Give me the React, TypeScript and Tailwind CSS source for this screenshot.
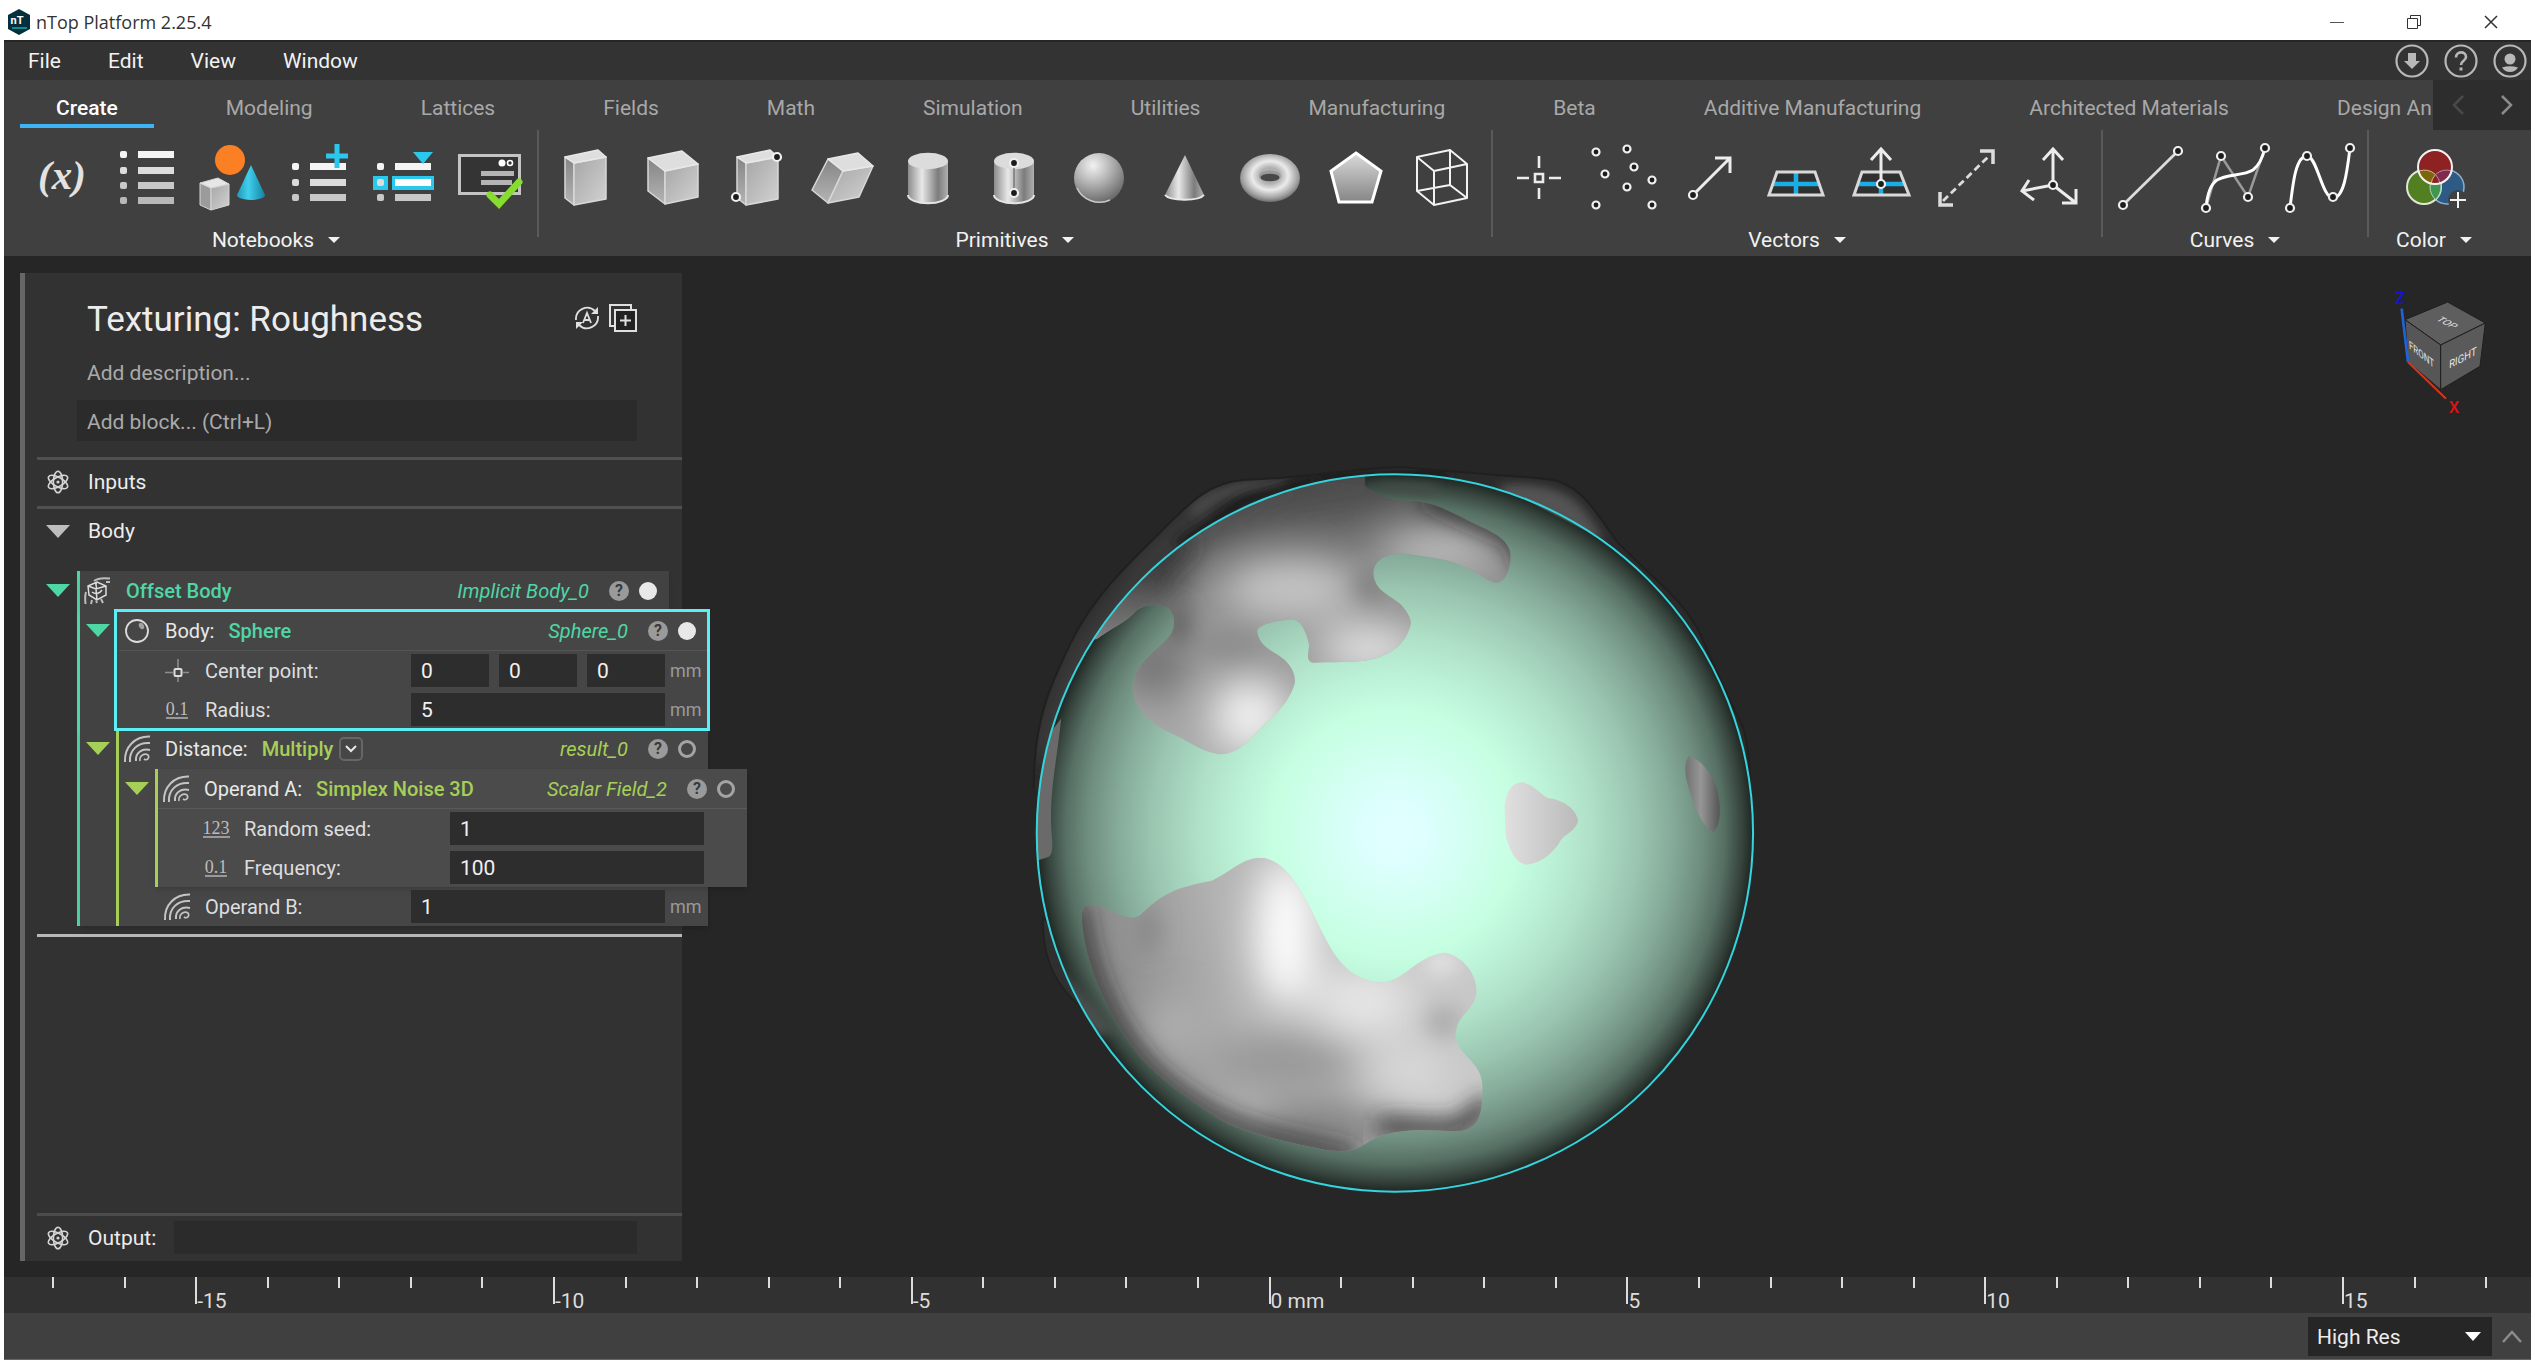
import type { ReactNode } from 'react';

/* ---------- small shared pieces ---------- */

function Caret({ className = '' }: { className?: string }) {
  return (
    <svg viewBox="0 0 12 6" className={`h-[6px] w-[12px] ${className}`} aria-hidden="true">
      <path d="M0 0H12L6 6Z" fill="currentColor" />
    </svg>
  );
}

function Toggle({ label, className = '' }: { label: string; className?: string }) {
  return (
    <button type="button" aria-label={`Collapse ${label}`} className={`flex shrink-0 justify-center ${className}`}>
      <svg viewBox="0 0 24 13" className="h-[13px] w-6" aria-hidden="true">
        <path d="M0 0H24L12 13Z" fill="currentColor" />
      </svg>
    </button>
  );
}

function Knob({ x, y, r = 4 }: { x: number; y: number; r?: number }) {
  return <circle cx={x} cy={y} r={r} fill="#1c1c1c" stroke="#f0f0f0" strokeWidth="2.2" />;
}

/* ---------- ribbon icons, all on an 86 x 80 field ---------- */

function BoxFaces({ top, left, front }: { top: string; left: string; front: string }) {
  return (
    <g strokeLinejoin="round" strokeWidth="1.5">
      <path d={left} fill="url(#faceSide)" stroke="#d8d8d8" />
      <path d={front} fill="url(#faceFront)" stroke="#d8d8d8" />
      <path d={top} fill="#dedede" stroke="#e8e8e8" />
    </g>
  );
}

const tallBox = (
  <BoxFaces
    top="M23 19L56 12L64 19L32 25Z"
    left="M23 19L32 25V67L23 60Z"
    front="M32 25L64 19V61L32 67Z"
  />
);

const cylinder = (
  <>
    <path d="M22 23V57A20 8.3 0 0 0 62 57V23Z" fill="url(#cyl)" />
    <path d="M22 57A20 8.3 0 0 0 62 57" fill="none" stroke="#e4e4e4" strokeWidth="2" />
    <ellipse cx="42" cy="23" rx="20" ry="8.3" fill="#dcdcdc" />
  </>
);

function ListRows({ ys, h, x = 16 }: { ys: number[]; h: number; x?: number }) {
  const tones = ['#f4f4f4', '#dcdcdc', '#c8c8c8', '#b8b8b8'];
  return (
    <>
      {ys.map((y, i) => (
        <g key={y} fill={tones[i]}>
          <rect x={x} y={y} width="7" height={h} rx="2" />
          <rect x={x + 18} y={y} width="36" height={h} />
        </g>
      ))}
    </>
  );
}

type Tool = { name: string; art: ReactNode };
type ToolGroup = { name: string; tools: Tool[] };

const groups: ToolGroup[] = [
  {
    name: 'Notebooks',
    tools: [
      {
        name: 'Variable',
        art: (
          <text x="44" y="51" textAnchor="middle" fontFamily="Liberation Serif, serif" fontStyle="italic" fontWeight="700" fontSize="41" fill="#e2e2e2">
            (x)
          </text>
        ),
      },
      { name: 'List', art: <ListRows ys={[13, 29, 44, 59]} h={7} /> },
      {
        name: 'Block',
        art: (
          <>
            <circle cx="40" cy="22" r="15" fill="#fb7f23" />
            <path d="M61 27L47 57A14 5 0 0 0 75 57Z" fill="url(#blueCone)" />
            <g stroke="#d5d5d5" strokeWidth="1">
              <path d="M10 45L21 50V72L10 67Z" fill="#9b9b9b" />
              <path d="M21 50L39 46V67L21 72Z" fill="url(#faceFront)" />
              <path d="M10 45L28 40L39 46L21 50Z" fill="#e6e6e6" />
            </g>
          </>
        ),
      },
      {
        name: 'Append to list',
        art: (
          <>
            <ListRows ys={[25, 41, 56]} h={7} />
            <path d="M61 6V30M50 18H72" stroke="#2bc8ee" strokeWidth="5" />
          </>
        ),
      },
      {
        name: 'Select list item',
        art: (
          <>
            <rect x="11" y="38" width="15" height="14" fill="#2bc8ee" />
            <rect x="30" y="38" width="42" height="14" fill="#2bc8ee" />
            <ListRows ys={[25, 41, 56]} h={7} x={15} />
            <rect x="33" y="41" width="36" height="7" fill="#fff" />
            <path d="M51 14H71L61 26Z" fill="#2bc8ee" />
          </>
        ),
      },
      {
        name: 'Validate',
        art: (
          <>
            <rect x="11.5" y="17.5" width="60" height="38" fill="#343434" stroke="#c4c4c4" strokeWidth="3" />
            <path d="M33 35.5H66M33 44.5H64" stroke="#b4b4b4" strokeWidth="5" />
            <circle cx="54" cy="25" r="3.5" fill="#fff" />
            <circle cx="62" cy="25" r="2.5" fill="none" stroke="#fff" strokeWidth="1.6" />
            <path d="M42 57L51 66L71 44" fill="none" stroke="#86dd2e" strokeWidth="7" strokeLinecap="round" />
          </>
        ),
      },
    ],
  },
  {
    name: 'Primitives',
    tools: [
      { name: 'Box', art: tallBox },
      {
        name: 'Cube',
        art: (
          <BoxFaces top="M20 20L54 13L70 26L37 33Z" left="M20 20L37 33V66L20 53Z" front="M37 33L70 26V59L37 66Z" />
        ),
      },
      {
        name: 'Box from corners',
        art: (
          <>
            {tallBox}
            <Knob x={63} y={19} />
            <Knob x={22} y={59} />
          </>
        ),
      },
      {
        name: 'Parallelepiped',
        art: (
          <BoxFaces top="M28 21L58 15L73 28L43 33Z" left="M28 21L43 33L28 65L12 52Z" front="M43 33L73 28L59 59L28 65Z" />
        ),
      },
      { name: 'Cylinder', art: cylinder },
      {
        name: 'Cylinder from points',
        art: (
          <>
            {cylinder}
            <path d="M42 25V55" stroke="#777" strokeWidth="1.5" />
            <Knob x={42} y={25} />
            <Knob x={42} y={55} />
          </>
        ),
      },
      {
        name: 'Sphere',
        art: (
          <>
            <circle cx="41" cy="40" r="25" fill="url(#ball)" />
            <path d="M19 50A25 25 0 0 0 52 62" fill="none" stroke="#c8c8c8" strokeWidth="1.5" />
          </>
        ),
      },
      {
        name: 'Cone',
        art: (
          <>
            <path d="M41 17L21 57A20 6 0 0 0 60 57Z" fill="url(#cyl)" />
            <path d="M21 57A20 6 0 0 0 60 57" fill="none" stroke="#e8e8e8" strokeWidth="2" />
          </>
        ),
      },
      {
        name: 'Torus',
        art: (
          <>
            <ellipse cx="40" cy="40" rx="30" ry="24" fill="url(#torus)" />
            <ellipse cx="40" cy="38" rx="11" ry="5.5" fill="#9a9a9a" />
            <ellipse cx="40" cy="39.5" rx="9.5" ry="3.8" fill="#484848" />
          </>
        ),
      },
      {
        name: 'Polygon',
        art: <path d="M40 15L65 33L56 64H23L15 33Z" fill="url(#faceDown)" stroke="#fff" strokeWidth="3" />,
      },
      {
        name: 'Bounding box',
        art: (
          <path
            d="M15 19L48 12L65 26L32 33ZM15 19V53L32 67L65 60V26M32 33V67M48 12V47L65 60M48 47L15 53"
            fill="none"
            stroke="#f2f2f2"
            strokeWidth="2"
            strokeLinejoin="round"
          />
        ),
      },
    ],
  },
  {
    name: 'Vectors',
    tools: [
      {
        name: 'Point',
        art: (
          <path d="M43 18V30M43 50V61M21 40H33M53 40H65M39 36H47V44H39Z" fill="none" stroke="#ececec" strokeWidth="2.6" />
        ),
      },
      {
        name: 'Point list',
        art: (
          <>
            {[[14, 14], [45, 11], [52, 29], [23, 36], [45, 49], [70, 42], [14, 67], [70, 67]].map(([x, y]) => (
              <Knob key={`${x}-${y}`} x={x} y={y} r={3.5} />
            ))}
          </>
        ),
      },
      {
        name: 'Vector',
        art: (
          <>
            <path d="M25 57L62 20M47 20H62V35" fill="none" stroke="#ececec" strokeWidth="3" />
            <Knob x={25} y={57} />
          </>
        ),
      },
      {
        name: 'Plane',
        art: (
          <>
            <path d="M23 34H61L69 57H15Z" fill="#303030" />
            <path d="M18 46H66M42 35V56" stroke="#1aaee6" strokeWidth="4.5" />
            <path d="M23 34H61L69 57H15Z" fill="none" stroke="#d8d8d8" strokeWidth="3" />
          </>
        ),
      },
      {
        name: 'Plane from normal',
        art: (
          <>
            <path d="M22 34H60L69 57H14Z" fill="#303030" />
            <path d="M17 46H65M41 46V56" stroke="#1aaee6" strokeWidth="4.5" />
            <path d="M22 34H60L69 57H14Z" fill="none" stroke="#d8d8d8" strokeWidth="3" />
            <path d="M41 46V12M31 22L41 11L51 22" fill="none" stroke="#ececec" strokeWidth="3" />
            <Knob x={41} y={46} />
          </>
        ),
      },
      {
        name: 'Vector between points',
        art: (
          <>
            <path d="M17 63L64 17" stroke="#dcdcdc" strokeWidth="2.8" strokeDasharray="7 4" />
            <path d="M54 13H67V26M14 54V67H27" fill="none" stroke="#dcdcdc" strokeWidth="3.5" />
          </>
        ),
      },
      {
        name: 'Frame',
        art: (
          <>
            <path d="M41 47V12M31 22L41 11L51 22M41 47L10 53M17 42L10 53L22 62M41 47L64 65M64 51V65H50" fill="none" stroke="#ececec" strokeWidth="3" />
            <Knob x={41} y={47} />
          </>
        ),
      },
    ],
  },
  {
    name: 'Curves',
    tools: [
      {
        name: 'Line',
        art: (
          <>
            <path d="M17 67L72 13" stroke="#dcdcdc" strokeWidth="2.8" />
            <Knob x={17} y={67} />
            <Knob x={72} y={13} />
          </>
        ),
      },
      {
        name: 'Control point curve',
        art: (
          <>
            <path d="M14 70L29 18L56 59L73 10" fill="none" stroke="#999" strokeWidth="2.5" />
            <path d="M14 70Q16 48 25 42C35 36 51 38 61 32Q69 26 73 10" fill="none" stroke="#fff" strokeWidth="3" />
            <Knob x={14} y={70} />
            <Knob x={29} y={18} />
            <Knob x={56} y={59} />
            <Knob x={73} y={10} />
          </>
        ),
      },
      {
        name: 'Interpolated curve',
        art: (
          <>
            <path d="M12 70C15 44 18 18 29 18C39 18 44 60 55 60C66 60 69 34 72 10" fill="none" stroke="#fff" strokeWidth="3" />
            <Knob x={12} y={70} />
            <Knob x={29} y={18} />
            <Knob x={55} y={59} />
            <Knob x={72} y={10} />
          </>
        ),
      },
    ],
  },
  {
    name: 'Color',
    tools: [
      {
        name: 'Add color',
        art: (
          <>
            <circle cx="56" cy="49" r="17" fill="#2c5c86" stroke="#8fb0c8" strokeWidth="1.5" />
            <circle cx="33" cy="49" r="17" fill="#527f22" stroke="#dfe8d5" strokeWidth="2" />
            <path d="M44.5 36.5A17 17 0 0 1 44.5 61.5A17 17 0 0 1 44.5 36.5Z" fill="#3d9750" stroke="#b5d6bd" />
            <circle cx="44" cy="29" r="17" fill="#8e2222" />
            <path d="M28 33A17 17 0 0 1 44.5 36.5A17 17 0 0 0 40 46A17 17 0 0 1 28 33Z" fill="#7d650e" stroke="#cdbd8a" />
            <path d="M61 33A17 17 0 0 0 44.5 36.5A17 17 0 0 1 49 46A17 17 0 0 0 61 33Z" fill="#812a50" stroke="#b98aa2" />
            <circle cx="44" cy="29" r="17" fill="none" stroke="#f2f2f2" strokeWidth="2" />
            <circle cx="67" cy="62" r="10" fill="#404040" />
            <path d="M67 54V70M59 62H75" stroke="#f2f2f2" strokeWidth="2" />
          </>
        ),
      },
    ],
  },
];

function IconDefs() {
  return (
    <svg className="absolute h-0 w-0" aria-hidden="true">
      <defs>
        <linearGradient id="faceFront" x1="0" y1="0" x2="1" y2="1">
          <stop offset="0" stopColor="#a6a6a6" />
          <stop offset="1" stopColor="#d2d2d2" />
        </linearGradient>
        <linearGradient id="faceSide" x1="0" y1="0" x2="0" y2="1">
          <stop offset="0" stopColor="#858585" />
          <stop offset="1" stopColor="#b4b4b4" />
        </linearGradient>
        <linearGradient id="faceDown" x1="0" y1="0" x2="0" y2="1">
          <stop offset="0" stopColor="#dadada" />
          <stop offset="1" stopColor="#858585" />
        </linearGradient>
        <linearGradient id="cyl" x1="0" y1="0" x2="1" y2="0">
          <stop offset="0" stopColor="#8c8c8c" />
          <stop offset="0.35" stopColor="#e8e8e8" />
          <stop offset="0.75" stopColor="#7c7c7c" />
          <stop offset="1" stopColor="#b0b0b0" />
        </linearGradient>
        <linearGradient id="blueCone" x1="0" y1="0" x2="1" y2="0">
          <stop offset="0" stopColor="#2196b5" />
          <stop offset="0.4" stopColor="#41cfee" />
          <stop offset="1" stopColor="#1583a0" />
        </linearGradient>
        <radialGradient id="ball" cx="0.38" cy="0.25" r="0.75">
          <stop offset="0" stopColor="#f2f2f2" />
          <stop offset="0.45" stopColor="#b8b8b8" />
          <stop offset="1" stopColor="#6c6c6c" />
        </radialGradient>
        <radialGradient id="torus" cx="0.5" cy="0.45" r="0.55">
          <stop offset="0.3" stopColor="#b0b0b0" />
          <stop offset="0.55" stopColor="#ebebeb" />
          <stop offset="0.85" stopColor="#a0a0a0" />
          <stop offset="1" stopColor="#6e6e6e" />
        </radialGradient>
      </defs>
    </svg>
  );
}

/* ---------- window chrome ---------- */

function TitleBar() {
  return (
    <header className="flex h-10 items-center bg-white pt-1 pl-[3px] font-['Open_Sans',sans-serif] text-[18px] text-[#333]">
      <svg viewBox="0 0 24 26" className="mr-[5px] h-[26px] w-6" aria-hidden="true">
        <path d="M12 0L23 6V20L12 26L1 20V6Z" fill="#04303d" />
        <path d="M5 19H20" stroke="#0f8a94" strokeWidth="2" />
        <text x="10" y="15" textAnchor="middle" fontFamily="Roboto, sans-serif" fontWeight="700" fontSize="11" fill="#fff">nT</text>
      </svg>
      <span className="flex-1">nTop Platform 2.25.4</span>
      <button type="button" aria-label="Minimize" className="flex w-[77px] justify-center">
        <svg viewBox="0 0 16 16" className="h-4 w-4" stroke="#555" fill="none"><path d="M1 8.5H15" /></svg>
      </button>
      <button type="button" aria-label="Restore" className="flex w-[77px] justify-center">
        <svg viewBox="0 0 16 16" className="h-4 w-4" stroke="#333" fill="none">
          <path d="M1.5 4.5H11.5V14.5H1.5ZM4.5 4.5V1.5H14.5V11.5H11.5" />
        </svg>
      </button>
      <button type="button" aria-label="Close" className="mr-[2px] flex w-[77px] justify-center">
        <svg viewBox="0 0 16 16" className="h-4 w-4" stroke="#333" strokeWidth="1.5" fill="none"><path d="M2 2L14 14M14 2L2 14" /></svg>
      </button>
    </header>
  );
}

function MenuBar() {
  return (
    <nav className="flex h-10 items-center border-t-2 border-[#252525] bg-[#333]">
      {['File', 'Edit', 'View', 'Window'].map((m) => (
        <button key={m} type="button" className="pr-[23px] pl-6">{m}</button>
      ))}
      <div className="ml-auto flex gap-[15px] pr-1 text-[#b8b8b8]">
        <button type="button" aria-label="Downloads">
          <svg viewBox="0 0 34 34" className="h-[34px] w-[34px]">
            <circle cx="17" cy="17" r="15.5" fill="none" stroke="currentColor" strokeWidth="2.2" />
            <path d="M13 9H21V17H25L17 25L9 17H13Z" fill="currentColor" />
          </svg>
        </button>
        <button type="button" aria-label="Help">
          <svg viewBox="0 0 34 34" className="h-[34px] w-[34px]">
            <circle cx="17" cy="17" r="15.5" fill="none" stroke="currentColor" strokeWidth="2.2" />
            <path d="M12 13.5C12 6.5 22 7 22 13C22 17 17 16.5 17 21" fill="none" stroke="currentColor" strokeWidth="2.6" />
            <rect x="15.5" y="23.5" width="3" height="3" fill="currentColor" />
          </svg>
        </button>
        <button type="button" aria-label="Account">
          <svg viewBox="0 0 34 34" className="h-[34px] w-[34px]">
            <circle cx="17" cy="17" r="15.5" fill="none" stroke="currentColor" strokeWidth="2.2" />
            <circle cx="17" cy="15" r="5.5" fill="currentColor" />
            <path d="M9 23.5Q17 21 25 23.5Q22 28 17 28Q12 28 9 23.5Z" fill="currentColor" />
          </svg>
        </button>
      </div>
    </nav>
  );
}

const tabs = [
  'Create', 'Modeling', 'Lattices', 'Fields', 'Math', 'Simulation', 'Utilities',
  'Manufacturing', 'Beta', 'Additive Manufacturing', 'Architected Materials', 'Design An',
];

function Ribbon() {
  return (
    <section className="h-44 bg-[#404040]">
      <div className="flex h-12">
        <nav className="flex min-w-0 flex-1 gap-9 overflow-hidden pl-4">
          {tabs.map((t, i) => (
            <button
              key={t}
              type="button"
              className={
                t === 'Create'
                  ? 'shrink-0 border-b-4 border-[#3fb4f5] px-9 pt-3 font-medium text-white'
                  : i === tabs.length - 1
                    ? 'shrink-0 border-b-4 border-transparent pt-3 pl-9 whitespace-nowrap text-[#a8a8a8]'
                    : 'shrink-0 border-b-4 border-transparent px-9 pt-3 whitespace-nowrap text-[#a8a8a8]'
              }
            >
              {t}
            </button>
          ))}
        </nav>
        <div className="flex h-[50px] w-[98px] shrink-0 bg-[#2d2d2d]">
          <button type="button" aria-label="Previous tabs" className="flex flex-1 items-center justify-center text-[#4a4a4a]">
            <svg viewBox="0 0 12 20" className="h-5 w-3" fill="none" stroke="currentColor" strokeWidth="2.5"><path d="M11 1L2 10L11 19" /></svg>
          </button>
          <button type="button" aria-label="Next tabs" className="flex flex-1 items-center justify-center text-[#8c8c8c]">
            <svg viewBox="0 0 12 20" className="h-5 w-3" fill="none" stroke="currentColor" strokeWidth="2.5"><path d="M1 1L10 10L1 19" /></svg>
          </button>
        </div>
      </div>
      <div className="flex pl-[11px]">
        {groups.map((g, i) => (
          <div key={g.name} className="flex">
            {i > 0 && <div className="mt-[2px] h-[107px] w-[2px] bg-[#5a5a5a]" />}
            <div className={g.name === 'Color' ? 'px-[22px] pt-[10px]' : 'px-[3px] pt-[10px]'}>
              <div className="flex">
                {g.tools.map((t) => (
                  <button key={t.name} type="button" aria-label={t.name} title={t.name}>
                    <svg viewBox="0 0 86 80" className="h-20 w-[86px]">{t.art}</svg>
                  </button>
                ))}
              </div>
              <button type="button" className="mx-auto mt-2 flex items-center gap-[14px] text-[#f2f2f2]">
                {g.name}
                <Caret />
              </button>
            </div>
          </div>
        ))}
      </div>
    </section>
  );
}

/* ---------- notebook panel ---------- */

function AtomIcon() {
  return (
    <svg viewBox="0 0 24 24" className="h-6 w-6" fill="none" stroke="#d4d4d4" strokeWidth="1.6" aria-hidden="true">
      <ellipse cx="12" cy="12" rx="4.6" ry="10.8" />
      <ellipse cx="12" cy="12" rx="4.6" ry="10.8" transform="rotate(60 12 12)" />
      <ellipse cx="12" cy="12" rx="4.6" ry="10.8" transform="rotate(120 12 12)" />
      <circle cx="12" cy="12" r="1.6" fill="#d4d4d4" stroke="none" />
    </svg>
  );
}

function FieldIcon() {
  return (
    <svg viewBox="0 0 28 28" className="h-7 w-7" fill="none" stroke="#c4c4c4" strokeWidth="2" aria-hidden="true">
      <path d="M2 27C1 12 12 1 27 1.5M7 27C6 15 15 7 27 8M13 26C12 18 19 13 27 15" />
      <path d="M17 26C16 20 22 18 25 20C27 23 24 26 21 24" strokeWidth="1.6" />
    </svg>
  );
}

function OffsetIcon() {
  return (
    <svg viewBox="0 0 28 28" className="h-7 w-7" fill="none" stroke="#dcdcdc" strokeWidth="1.5" aria-hidden="true">
      <path d="M4 9L13 5L22 9V18L13 23L5 18ZM4 9L12 12L22 9M12 12L13 23M8 15C12 18 16 16 18 13M13 5C10 8 14 10 12 12" />
      <path d="M10 4C15 0 21 1 26 1.5M22 5H26M1.5 27C1 22 1 18 2 15M7 27L8 23M13 26L12 23.5M19 26L17 22" strokeWidth="2" stroke="#bdbdbd" />
    </svg>
  );
}

function SphereIcon() {
  return (
    <svg viewBox="0 0 26 26" className="h-[26px] w-[26px]" fill="none" aria-hidden="true">
      <circle cx="13" cy="13" r="11" stroke="#dcdcdc" strokeWidth="1.8" />
      <ellipse cx="17.5" cy="8" rx="2.4" ry="3.4" transform="rotate(-30 17.5 8)" fill="#a2a2a2" />
    </svg>
  );
}

function PointIcon() {
  return (
    <svg viewBox="0 0 24 24" className="h-6 w-6" fill="none" stroke="#8e8e8e" strokeWidth="1.5" aria-hidden="true">
      <path d="M13 0V9M13 18V23M0 13.5H8M18 13.5H24" />
      <rect x="9.5" y="10" width="7" height="7" rx="1" stroke="#dcdcdc" strokeWidth="2" />
    </svg>
  );
}

function NumberIcon({ text }: { text: string }) {
  return (
    <span className="border-b-2 border-[#999] font-['Liberation_Serif',serif] text-[18px] leading-4 text-[#bdbdbd]">{text}</span>
  );
}

type HeaderProps = {
  icon: ReactNode;
  label?: string;
  block: string;
  output: string;
  tone: string;
  filled?: boolean;
  menu?: boolean;
  className?: string;
};

function BlockHeader({ icon, label, block, output, tone, filled, menu, className = '' }: HeaderProps) {
  return (
    <div className={`flex h-10 items-center pr-3 text-[#e8e8e8] ${className}`}>
      <span className="mr-[10px] flex w-9 justify-center">{icon}</span>
      {label && <span className="mr-[14px]">{label}</span>}
      <span className={`font-medium ${tone}`}>{block}</span>
      {menu && (
        <button type="button" aria-label="Change operation" className="ml-[6px] flex h-6 w-6 items-center justify-center rounded-[5px] border-2 border-[#666]">
          <svg viewBox="0 0 12 8" className="h-2 w-3" fill="none" stroke="#e8e8e8" strokeWidth="2"><path d="M1 1L6 6L11 1" /></svg>
        </button>
      )}
      <span className={`ml-auto italic ${tone}`}>{output}</span>
      <button type="button" aria-label={`Help for ${block}`} className="ml-5 h-5 w-5 rounded-full bg-[#9a9a9a] text-[16px] leading-5 font-bold text-[#3a3a3a]">
        ?
      </button>
      <span className={filled ? 'ml-[10px] h-[18px] w-[18px] rounded-full bg-[#e8e8e8]' : 'ml-[10px] h-[18px] w-[18px] rounded-full border-3 border-[#a4a4a4]'} />
    </div>
  );
}

type FieldProps = { icon: ReactNode; label: string; values: string[]; unit?: string };

function FieldRow({ icon, label, values, unit }: FieldProps) {
  return (
    <div className="flex h-[39px] items-center pl-10 text-[#dedede]">
      <span className="mr-[10px] flex w-9 justify-center">{icon}</span>
      <span className="w-[206px] shrink-0">{label}</span>
      <span className="flex w-[254px] shrink-0 gap-[10px]">
        {values.map((v, i) => (
          <input
            key={i}
            aria-label={values.length > 1 ? `${label} ${'XYZ'[i]}` : label}
            defaultValue={v}
            className="h-[33px] w-0 min-w-0 flex-1 bg-[#2d2d2d] pl-[10px] text-[21px] text-[#f0f0f0]"
          />
        ))}
      </span>
      {unit && <span className="ml-[5px] text-[18px] text-[#999]">{unit}</span>}
    </div>
  );
}

const teal = 'text-[#4fd6a5]';
const lime = 'text-[#a6cf57]';

function BlockTree() {
  return (
    <div className="mt-4 ml-3 flex text-[20px] leading-7">
      <Toggle label="Offset Body" className="mt-[13px] h-[13px] w-10 pl-[2px] text-[#4fd6a5]" />
      <div className="w-[592px] shrink-0 border-l-3 border-[#4fd6a5]">
        <BlockHeader icon={<OffsetIcon />} block="Offset Body" output="Implicit Body_0" tone={teal} filled className="bg-[#424242] shadow-md" />
        <div className="flex w-[628px] bg-[#424242]">
          <Toggle label="Sphere" className="mt-[13px] h-[13px] w-9 text-[#4fd6a5]" />
          <div className="relative w-[592px] shrink-0 bg-[#464646] pl-[3px] outline-3 -outline-offset-1 outline-[#5ceef5]">
            <BlockHeader icon={<SphereIcon />} label="Body:" block="Sphere" output="Sphere_0" tone={teal} filled className="border-b border-[#555]" />
            <FieldRow icon={<PointIcon />} label="Center point:" values={['0', '0', '0']} unit="mm" />
            <FieldRow icon={<NumberIcon text="0.1" />} label="Radius:" values={['5']} unit="mm" />
          </div>
        </div>
        <div className="flex w-[628px] bg-[#424242] shadow-md">
          <Toggle label="Multiply" className="mt-[13px] h-[13px] w-9 text-[#a6cf57]" />
          <div className="w-[592px] shrink-0 border-l-3 border-[#a6cf57] bg-[#464646]">
            <BlockHeader icon={<FieldIcon />} label="Distance:" block="Multiply" output="result_0" tone={lime} menu />
            <div className="flex">
              <Toggle label="Simplex Noise 3D" className="mt-[13px] h-[13px] w-9 text-[#a6cf57]" />
              <div className="w-[592px] shrink-0 border-l-3 border-[#a6cf57] bg-[#4b4b4b] shadow-md">
                <BlockHeader icon={<FieldIcon />} label="Operand A:" block="Simplex Noise 3D" output="Scalar Field_2" tone={lime} className="border-b border-[#5a5a5a]" />
                <FieldRow icon={<NumberIcon text="123" />} label="Random seed:" values={['1']} />
                <FieldRow icon={<NumberIcon text="0.1" />} label="Frequency:" values={['100']} />
              </div>
            </div>
            <FieldRow icon={<FieldIcon />} label="Operand B:" values={['1']} unit="mm" />
          </div>
        </div>
      </div>
    </div>
  );
}

function NotebookPanel() {
  return (
    <aside className="relative z-10 mt-[17px] mb-4 ml-4 flex w-[662px] shrink-0 flex-col border-l-5 border-[#666] bg-[#323232] text-[#ececec]">
      <div className="flex items-center pt-6 pr-[45px] pl-[62px]">
        <h1 className="flex-1 text-[35px] leading-[46px]">Texturing: Roughness</h1>
        <button type="button" aria-label="Auto update" className="mb-1">
          <svg viewBox="0 0 26 26" className="h-[26px] w-[26px]" fill="none" stroke="#e0e0e0" strokeWidth="1.8">
            <path d="M2 15A11.2 11.2 0 0 1 21 6M24 11A11.2 11.2 0 0 1 5 20" />
            <path d="M24 2V9H17ZM2 24V17H9Z" fill="#e0e0e0" stroke="none" />
            <path d="M9 18L13 8L17 18M10.5 15H15.5" />
          </svg>
        </button>
        <button type="button" aria-label="New section" className="mb-1 ml-[9px]">
          <svg viewBox="0 0 28 28" className="h-7 w-7" fill="none" stroke="#e0e0e0" strokeWidth="2">
            <path d="M5 22H1V1H22V5" />
            <rect x="6" y="6" width="21" height="21" fill="#222" />
            <path d="M16.5 11V22M11 16.5H22" />
          </svg>
        </button>
      </div>
      <input
        aria-label="Description"
        placeholder="Add description..."
        className="mt-4 mr-[45px] ml-[62px] h-7 bg-transparent placeholder:text-[#aaa]"
      />
      <input
        aria-label="Add block"
        placeholder="Add block... (Ctrl+L)"
        className="mt-[13px] mr-[45px] ml-[52px] h-[41px] bg-[#2b2b2b] pt-[2px] pl-[10px] placeholder:text-[#aaa]"
      />
      <div className="mt-4 ml-3 border-t-3 border-[#505050]">
        <div className="flex h-[46px] items-center gap-[18px] pb-[2px] pl-[9px]">
          <AtomIcon />
          <h2>Inputs</h2>
        </div>
      </div>
      <div className="ml-3 flex h-[49px] items-center gap-[18px] border-t-3 border-[#505050] pb-[2px] pl-[9px]">
        <Toggle label="Body" className="text-[#bdbdbd]" />
        <h2>Body</h2>
      </div>
      <BlockTree />
      <div className="mt-2 ml-3 h-[3px] bg-[#b8b8b8]" />
      <div className="mt-auto ml-3 flex h-12 items-center border-t-3 border-[#4c4c4c] pr-[45px] pb-[2px] pl-[9px]">
        <AtomIcon />
        <label htmlFor="output" className="ml-[18px] w-[86px]">Output:</label>
        <input id="output" className="h-[33px] min-w-0 flex-1 bg-[#2b2b2b] px-2" />
      </div>
    </aside>
  );
}

/* ---------- 3D view ---------- */

const upperPatch =
  'M715 92C740 112 770 122 800 123C850 120 900 155 950 178C985 195 1000 210 1001 235C1000 262 990 285 975 287C955 288 940 262 880 243C850 236 830 234 790 228C750 230 730 245 732 272C738 312 775 312 795 342C808 362 808 370 798 390C785 420 750 440 705 445C670 448 640 446 618 448C600 448 603 435 606 412C600 385 590 360 570 361C545 363 505 370 504 384C507 410 525 420 545 432C565 445 580 465 578 488C570 520 548 545 520 570C490 600 470 632 430 632C390 625 370 605 340 592C300 573 263 545 260 500C262 450 300 430 330 397C345 380 345 350 330 338C310 328 285 330 268 342C250 365 215 380 190 400L60 420L60 40L715 40Z';

const lowerPatch =
  'M510 840C550 842 575 880 600 925C640 1000 660 1080 740 1090C790 1095 810 1040 870 1031C900 1035 932 1065 934 1105C934 1150 893 1150 893 1200C900 1240 945 1250 946 1300C946 1350 942 1390 895 1390C840 1388 770 1380 720 1412C695 1428 680 1433 640 1428C560 1410 480 1395 430 1365C370 1325 310 1285 270 1235C220 1170 165 1060 160 960C160 932 180 930 200 940C230 950 255 970 275 955C320 910 345 900 415 886C450 870 475 840 510 840Z';

function SphereView() {
  return (
    <svg viewBox="0 0 1568 1568" preserveAspectRatio="none" className="mt-[184px] ml-[318px] h-[780px] w-[800px] shrink-0" role="img" aria-label="Sphere with noise offset">
      <defs>
        <radialGradient id="globe">
          <stop offset="0" stopColor="#e2ffff" />
          <stop offset="0.08" stopColor="#deffff" />
          <stop offset="0.34" stopColor="#c6ffe2" />
          <stop offset="0.42" stopColor="#bef5da" />
          <stop offset="0.55" stopColor="#afe0c8" />
          <stop offset="0.68" stopColor="#9ac5b0" />
          <stop offset="0.78" stopColor="#84a998" />
          <stop offset="0.86" stopColor="#6e8d7e" />
          <stop offset="0.92" stopColor="#566f63" />
          <stop offset="0.97" stopColor="#36443d" />
          <stop offset="1" stopColor="#1f2623" />
        </radialGradient>
        <linearGradient id="upperBase" x1="0.45" y1="0" x2="0.6" y2="1">
          <stop offset="0" stopColor="#434343" />
          <stop offset="0.2" stopColor="#656565" />
          <stop offset="0.4" stopColor="#8e8e8e" />
          <stop offset="0.65" stopColor="#9a9a9a" />
          <stop offset="1" stopColor="#b0b0b0" />
        </linearGradient>
        <linearGradient id="lowerBase" x1="0.1" y1="0.5" x2="0.8" y2="0.4">
          <stop offset="0" stopColor="#8c8c8c" />
          <stop offset="0.4" stopColor="#b2b2b2" />
          <stop offset="1" stopColor="#c8c8c8" />
        </linearGradient>
        <linearGradient id="chip" x1="0" x2="1">
          <stop offset="0" stopColor="#e0e0e0" />
          <stop offset="1" stopColor="#bababa" />
        </linearGradient>
        <linearGradient id="fin" x1="0" x2="1">
          <stop offset="0" stopColor="#727272" />
          <stop offset="0.45" stopColor="#969696" />
          <stop offset="1" stopColor="#555" />
        </linearGradient>
        <clipPath id="disc"><ellipse cx="774" cy="790" rx="702" ry="721" /></clipPath>
        <clipPath id="hull"><path d="M66 700C66 560 100 490 140 405C180 320 250 250 300 200C360 140 400 85 480 80C580 78 700 55 790 55C900 65 1000 72 1070 78C1140 85 1170 150 1210 205C1290 290 1340 320 1375 395C1400 460 1420 500 1455 575C1470 620 1470 680 1472 740L774 1200Z" /></clipPath>
        <clipPath id="upper"><path d={upperPatch} /></clipPath>
        <clipPath id="lower"><path d={lowerPatch} /></clipPath>
        <filter id="wide" x="-50%" y="-50%" width="200%" height="200%"><feGaussianBlur stdDeviation="40" /></filter>
        <filter id="soft" x="-50%" y="-50%" width="200%" height="200%"><feGaussianBlur stdDeviation="22" /></filter>
        <filter id="fine" x="-50%" y="-50%" width="200%" height="200%"><feGaussianBlur stdDeviation="10" /></filter>
      </defs>

      {/* bumps that stick out behind the outline */}
      <g clipPath="url(#hull)">
        <rect width="1568" height="1568" fill="#2a2a2a" />
        <path d="M80 640L160 430L300 240L420 130" fill="none" stroke="#3c3c3c" strokeWidth="50" filter="url(#soft)" />
        <path d="M380 150C410 110 450 96 560 92" fill="none" stroke="#474747" strokeWidth="30" filter="url(#fine)" />
        <path d="M350 210L480 120L620 80" fill="none" stroke="#1e1e1e" strokeWidth="22" filter="url(#fine)" />
        <path d="M620 76L880 66" fill="none" stroke="#1a1a1a" strokeWidth="22" filter="url(#fine)" />
        <path d="M980 90C1040 84 1100 96 1130 125C1155 150 1165 170 1185 200L1000 180Z" fill="#525252" filter="url(#fine)" />
      </g>
      <path d="M66 700C66 560 100 490 140 405C180 320 250 250 300 200C360 140 400 85 480 80C580 78 700 55 790 55C900 65 1000 72 1070 78C1140 85 1170 150 1210 205C1290 290 1340 320 1375 395C1400 460 1420 500 1455 575C1470 620 1470 680 1472 740" fill="none" stroke="#202020" strokeWidth="4" />
      <path d="M84 960C84 1050 110 1100 170 1150L230 1100Z" fill="#2f2f2f" stroke="#202020" strokeWidth="3" />

      <ellipse cx="774" cy="790" rx="702" ry="721" fill="url(#globe)" />

      <g clipPath="url(#disc)">
        <g clipPath="url(#upper)">
          <rect x="60" y="60" width="950" height="590" fill="url(#upperBase)" />
          <g filter="url(#wide)">
            <ellipse cx="270" cy="280" rx="100" ry="60" fill="#3c3c3c" />
            <path d="M320 180L500 90L800 70L780 110L520 140L340 240Z" fill="#474747" />
            <ellipse cx="570" cy="300" rx="130" ry="60" fill="#c6c6c6" />
            <ellipse cx="860" cy="220" rx="120" ry="36" fill="#cacaca" />
            <ellipse cx="725" cy="420" rx="100" ry="50" fill="#e2e2e2" />
            <ellipse cx="490" cy="555" rx="75" ry="75" fill="#f2f2f2" />
            <ellipse cx="300" cy="450" rx="60" ry="60" fill="#707070" />
          </g>
          <g filter="url(#soft)">
            <path d="M290 270L370 200" stroke="#303030" strokeWidth="34" />
            <path d="M830 112L1010 195L1030 260" fill="none" stroke="#1c1c1c" strokeWidth="26" />
            <ellipse cx="725" cy="290" rx="26" ry="30" fill="#7c7c7c" />
            <ellipse cx="350" cy="370" rx="24" ry="40" fill="#606060" />
            <ellipse cx="450" cy="410" rx="70" ry="20" fill="#8a8a8a" />
            <path d="M180 400L250 330L300 310" stroke="#5e5e5e" strokeWidth="30" fill="none" />
          </g>
        </g>
        <path d="M730 88Q790 82 865 94L840 110Q800 106 750 100Z" fill="#454b48" filter="url(#fine)" />
        <path d="M1000 100C1050 135 1110 160 1170 195L1220 180L1050 60Z" fill="#4a4a4a" />
        <path d="M120 560C112 640 100 690 100 760C100 800 108 825 96 838L60 850L60 640Z" fill="#6a6a6a" />
        <path d="M90 1020C130 1090 190 1130 225 1185L190 1200L90 1080Z" fill="#4a504d" filter="url(#fine)" />

        <g clipPath="url(#lower)">
          <rect x="150" y="830" width="810" height="610" fill="url(#lowerBase)" />
          <g filter="url(#wide)">
            <ellipse cx="560" cy="990" rx="60" ry="150" fill="#fff" />
            <ellipse cx="710" cy="1130" rx="100" ry="70" fill="#e6e6e6" />
            <ellipse cx="800" cy="1270" rx="80" ry="50" fill="#dadada" />
            <ellipse cx="560" cy="1250" rx="150" ry="50" fill="#949494" />
            <ellipse cx="340" cy="1180" rx="50" ry="50" fill="#b4b4b4" />
            <ellipse cx="640" cy="1380" rx="140" ry="40" fill="#747474" />
          </g>
          <g filter="url(#soft)">
            <path d="M150 930C165 1070 215 1170 270 1240C310 1290 370 1335 440 1370C520 1405 600 1420 700 1440" fill="none" stroke="#202020" strokeWidth="30" />
            <ellipse cx="290" cy="985" rx="18" ry="50" fill="#848484" />
            <ellipse cx="865" cy="1050" rx="34" ry="20" fill="#f0f0f0" />
            <ellipse cx="870" cy="1170" rx="34" ry="30" fill="#a8a8a8" />
            <path d="M740 1380L900 1385L960 1330" fill="none" stroke="#2a2a2a" strokeWidth="34" />
          </g>
        </g>

        <path d="M1022 688C1045 690 1058 712 1075 720C1100 722 1130 740 1133 765C1128 790 1105 790 1095 812C1075 840 1055 850 1032 854C1005 848 1000 820 992 800C990 780 990 760 989 738C992 710 1000 690 1022 688Z" fill="url(#chip)" />
        <path d="M1350 635C1380 645 1395 675 1405 700C1415 740 1412 780 1397 788C1375 775 1360 735 1350 700C1342 675 1340 650 1350 635Z" fill="url(#fin)" />
      </g>

      <ellipse cx="774" cy="790" rx="702" ry="721" fill="none" stroke="#35d3dc" strokeWidth="4" />
    </svg>
  );
}

function ViewCube() {
  return (
    <svg viewBox="450 860 300 390" className="mt-[31px] mr-[41px] ml-auto h-[130px] w-[100px] shrink-0 font-['Roboto',sans-serif]" role="img" aria-label="View orientation">
      <g stroke="#1e1e1e" strokeWidth="3" strokeLinejoin="round">
        <path d="M623 905L736 968L602 1034L495 958Z" fill="#5e5e5e" />
        <path d="M495 958L602 1034V1168L504 1085Z" fill="#565656" />
        <path d="M602 1034L736 968L720 1098L602 1168Z" fill="#5a5a5a" />
      </g>
      <path d="M485 925L504 1085" stroke="#1f63d8" strokeWidth="8" />
      <path d="M504 1085L618 1195" stroke="#d8341c" strokeWidth="6" />
      <g fill="#e4e4e4" fontSize="34" textAnchor="middle">
        <text transform="matrix(0.8 0.42 -0.8 0.42 612 972)">TOP</text>
        <text transform="matrix(0.7 0.56 0.06 1 545 1074)">FRONT</text>
        <text transform="matrix(0.85 -0.44 -0.04 1 668 1084)">RIGHT</text>
      </g>
      <text x="481" y="911" textAnchor="middle" fontSize="50" fontWeight="500" fill="#1212e0">Z</text>
      <text x="642" y="1238" textAnchor="middle" fontSize="50" fontWeight="500" fill="#e01212">X</text>
    </svg>
  );
}

function Ruler() {
  const marks = Array.from({ length: 35 }, (_, i) => i - 17);
  return (
    <div className="flex h-9 bg-[#313131] pr-[46px] pl-12 text-[#dcdcdc]">
      {marks.map((m) => (
        <div key={m} className={m === 17 ? 'flex w-0' : 'flex w-0 flex-1'}>
          <span className={m % 5 === 0 ? 'h-[27px] w-[2px] shrink-0 bg-[#dcdcdc]' : 'h-[11px] w-[2px] shrink-0 bg-[#dcdcdc]'} />
          {m % 5 === 0 && <span className="pt-3 text-[21px] leading-6 whitespace-nowrap">{m === 0 ? '0 mm' : m}</span>}
        </div>
      ))}
    </div>
  );
}

function StatusBar() {
  return (
    <footer className="flex h-[46px] items-center justify-end bg-[#404040]">
      <label className="relative flex h-[39px] w-[184px] items-center bg-[#262626]">
        <select aria-label="Resolution" className="h-full w-full appearance-none bg-transparent pt-[2px] pl-[9px] text-[21px] text-[#ececec]">
          <option>High Res</option>
        </select>
        <svg viewBox="0 0 16 9" className="pointer-events-none absolute right-[11px] h-[9px] w-4" aria-hidden="true">
          <path d="M0 0H16L8 9Z" fill="#fff" />
        </svg>
      </label>
      <button type="button" aria-label="Expand log" className="flex w-[39px] justify-center">
        <svg viewBox="0 0 20 13" className="h-[13px] w-5" fill="none" stroke="#8c8c8c" strokeWidth="2.5"><path d="M1 12L10 2L19 12" /></svg>
      </button>
    </footer>
  );
}

export default function App() {
  return (
    <div className="flex min-h-screen flex-col bg-white pr-[6px] pb-[4px] pl-1 font-['Roboto',sans-serif] text-[21px] leading-7 text-[#f2f2f2]">
      <IconDefs />
      <TitleBar />
      <MenuBar />
      <Ribbon />
      <main className="flex flex-1 items-stretch overflow-hidden bg-[#262626]">
        <NotebookPanel />
        <div className="flex min-w-0 flex-1 items-start">
          <SphereView />
          <ViewCube />
        </div>
      </main>
      <Ruler />
      <StatusBar />
      <div className="h-px bg-[#666]" />
    </div>
  );
}
